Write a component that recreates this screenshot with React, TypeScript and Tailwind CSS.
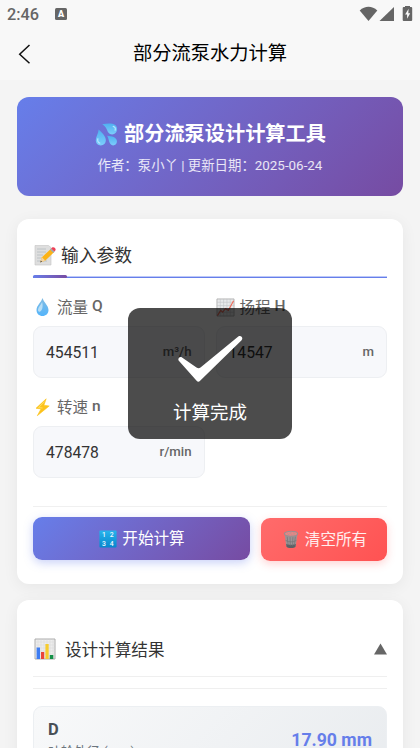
import React from "react";

type IconProps = { className?: string };

const Sweat = ({ className }: IconProps) => (
  <svg className={className} viewBox="0 0 24 24">
    <defs>
      <linearGradient id="sweat" x1="0" y1="0" x2="0" y2="1">
        <stop offset="0" stopColor="#4fb0f0" />
        <stop offset="1" stopColor="#7ccdfb" />
      </linearGradient>
    </defs>
    <path d="M7.5 1.4c5-1.200 10.500-1.300 13.300.4 2.800 1.900 2.900 6.200.8 8.500-2.200 2.300-5.800 2.200-7.700-.3C12 7 12 4 7.500 1.400z" fill="url(#sweat)" />
    <path d="M3.800 6.800c3.500 3.200 7.500 7.200 7.500 11.200 0 3.200-2.300 5.400-5.300 5.400S.8 21.100.8 18c0-3.700 2.700-6.600 3-11.200z" fill="url(#sweat)" />
    <path d="M12.700 13.400c4.800.2 9.900 1.600 10.200 5.500.2 2.700-1.700 4.500-4 4.500-4.300 0-4-6-6.200-10z" fill="url(#sweat)" />
    <path d="M3 16.500c-.7 2 .3 4 2 4.500M19 3.500c2 .5 2.700 2.300 2 4" stroke="#b5e4ff" strokeWidth="1.300" strokeLinecap="round" fill="none" />
  </svg>
);

const Memo = ({ className }: IconProps) => (
  <svg className={className} viewBox="0 0 22 22">
    <path d="M1 1.500h13.500l2.500 2v17.500H1z" fill="#dedede" stroke="#c4c4c4" strokeWidth=".6" />
    <path d="M3 5h9M3 8h9M3 11h6M3 14h4M3 17h10" stroke="#b5bcc0" strokeWidth=".8" />
    <path d="M6.200 18.300l1.700-5L17 4.700l3.200 3.400-9.100 8.600z" fill="#fcb316" />
    <path d="M8 13.200l3.200 3.400-5 1.800z" fill="#f3d3a2" />
    <path d="M6.900 16.500l1.200 1.200-1.900.7z" fill="#444" />
    <path d="M16 5.600l1.400-1.300 3.300 3.300-1.400 1.400z" fill="#9eacb3" />
    <path d="M17.200 4.500l.9-.9c1.900-1.500 4.500 1.100 3.200 2.900l-.9 1.100z" fill="#ee4056" />
  </svg>
);

const Droplet = ({ className }: IconProps) => (
  <svg className={className} viewBox="0 0 18 20">
    <defs>
      <linearGradient id="drop" x1="0" y1="0" x2="0" y2="1">
        <stop offset="0" stopColor="#82bce2" />
        <stop offset="1" stopColor="#55b5fb" />
      </linearGradient>
    </defs>
    <path d="M9 1c1.300 4.500 6 7.500 6 12 0 3.700-2.700 6-6 6s-6-2.300-6-6C3 8.500 7.700 5.500 9 1z" fill="url(#drop)" />
    <path d="M8.600 5c-1 3-4 5-4.100 7.800-.1 1.500 1 2.500 2.200 1.800C9.500 13 9.500 8 8.600 5z" fill="#b8def5" />
  </svg>
);

const Trend = ({ className }: IconProps) => (
  <svg className={className} viewBox="0 0 20 20">
    <path d="M1 1h18v18H1z" fill="#e7e9ea" stroke="#a6a6a6" strokeWidth=".8" />
    <path d="M4.500 1v18M8 1v18M11.500 1v18M15 1v18M1 4.500h18M1 8h18M1 11.500h18M1 15h18" stroke="#bfc3c5" strokeWidth=".6" />
    <path d="M1.500 18.500L5 13l2 2 3-4 3 2 5.500-10" stroke="#ee6b5a" strokeWidth="1.200" fill="none" />
  </svg>
);

const Bolt = ({ className }: IconProps) => (
  <svg className={className} viewBox="0 0 18 20">
    <path d="M12.700 1.800L2.500 11.300l5 .6-3.700 6.800L15.700 9l-5.300-.8z" fill="#fcc21b" stroke="#fcc21b" strokeWidth=".6" strokeLinejoin="round" />
    <path d="M11 4.700L5 10.600l4 .4" stroke="#ffdf63" strokeWidth="1" fill="none" />
  </svg>
);

const Numbers = ({ className }: IconProps) => (
  <svg className={className} viewBox="0 0 18 18">
    <defs>
      <linearGradient id="nums" x1="0" y1="0" x2="0" y2="1">
        <stop offset="0" stopColor="#27b4ec" />
        <stop offset="1" stopColor="#0786cd" />
      </linearGradient>
    </defs>
    <rect x=".4" y=".4" width="17.200" height="17.200" rx="1" fill="url(#nums)" />
    <g fill="#eef9fe" fontSize="6.800" fontWeight="500" fontFamily="Roboto" textAnchor="middle">
      <text x="5" y="7.300">1</text>
      <text x="12.700" y="7.300">2</text>
      <text x="5" y="15.500">3</text>
      <text x="12.700" y="15.500">4</text>
    </g>
  </svg>
);

const Trash = ({ className }: IconProps) => (
  <svg className={className} viewBox="0 0 18 20">
    <path d="M2.300 4l1.700 13c.2 2 9.800 2 10 0l1.700-13z" fill="#9b9496" />
    <path d="M3.900 14.500l.4 3c.6 1.800 8.800 1.800 9.400 0l.4-3c-2 1.500-8.200 1.500-10.200 0z" fill="#5d6165" />
    <path d="M5 7l1 9M8 7.500l.3 9M11 7.500l-.4 9M13.600 7l-1 9M3.400 11c3 2 8.200 2 11.200 0" stroke="#777577" strokeWidth=".8" fill="none" />
    <ellipse cx="9" cy="4" rx="7" ry="2.700" fill="#e98583" stroke="#9b8e90" strokeWidth="1.200" />
    <path d="M5 3l2 3M8 2l2 4M11 2l2 3M13 3l-3 3M10 2L6 5" stroke="#aa9496" strokeWidth=".5" />
  </svg>
);

const BarChart = ({ className }: IconProps) => (
  <svg className={className} viewBox="0 0 22 22">
    <path d="M1 1h20v20H1z" fill="#ededed" stroke="#acacac" strokeWidth="1" />
    <path d="M4 1v20M7 1v20M10 1v20M13 1v20M16 1v20M19 1v20M1 4h20M1 7h20M1 10h20M1 13h20M1 16h20" stroke="#d4d4d4" strokeWidth=".5" />
    <path d="M2.600 9.500h3.400V21H2.600z" fill="#3e7df2" />
    <path d="M7 14h3.200v7H7z" fill="#ea4437" />
    <path d="M11.400 6h3.300v15h-3.300z" fill="#f6cc2e" />
    <path d="M15.800 17h3.500v4h-3.500z" fill="#149048" />
  </svg>
);

const StatusBar = () => (
  <div className="flex h-7 items-center justify-between pl-[7px] pr-[7px] text-[#666]">
    <div className="flex items-center gap-4">
      <span className="w-8 pt-[2px] text-[16.300px] leading-7 font-medium whitespace-nowrap">2:46</span>
      <span className="flex size-3 items-center justify-center rounded-[1.500px] bg-[#666] text-[9px] leading-none font-black text-white">
        A
      </span>
    </div>
    <svg className="-mt-[3px] h-[18px] w-[54px]" viewBox="0 0 54 18" fill="#656565">
      <path d="M.7 6.500C6 1.500 13 1.500 18.300 6.500L9.500 17z" />
      <path d="M35 3v14H20.500z" />
      <path d="M46 3V2h5v1h1.200q1 0 1 1v12q0 1-1 1h-7.500q-1 0-1-1V4q0-1 1-1z" />
      <path d="M49.600 4.800l-3.500 5.600h2v4.300l3.100-5.500h-1.900z" fill="#f8f8f8" />
    </svg>
  </div>
);

type FieldProps = {
  icon: React.ReactNode;
  name: string;
  symbol: string;
  value: string;
  unit: string;
};

const Field = ({ icon, name, symbol, value, unit }: FieldProps) => (
  <div>
    <div className="flex h-6 items-center gap-[5px] text-[15.500px] text-[#666]">
      {icon}
      <span className="flex gap-1">
        <span className="pt-[3px]">{name}</span>
        <span className="pt-px font-medium">{symbol}</span>
      </span>
    </div>
    <div className="mt-[7px] flex h-[52px] items-center justify-between rounded-[9px] border border-[#edeff2] bg-[#f7f8fb] px-3">
      <span className="pt-[2px] text-[15.700px] text-[#333]">{value}</span>
      <span className="text-[13.200px] font-medium text-[#666]">{unit}</span>
    </div>
  </div>
);

const Toast = () => (
  <div className="absolute top-[308px] left-32 flex h-[131px] w-[164px] flex-col items-center rounded-xl bg-black/70 pt-[27px] text-white">
    <svg className="mr-px h-[48px] w-[66px]" viewBox="0 0 66 48">
      <path d="M5 22.600c-1.800-1.500-4.500.7-3.400 3l18 20.200q1.700 1.800 3.500 0L64.600 5.200c2-2.300-.7-5.300-3.300-3.600L23.500 32.500q-1.900 1.400-4 0z" fill="#fff" />
    </svg>
    <span className="mt-4 text-[18.500px] leading-7">计算完成</span>
  </div>
);

const App = () => {
  return (
    <div className="relative h-[748px] w-[420px] overflow-hidden bg-[#f4f4f4] font-['Roboto','Noto_Sans_CJK_SC',sans-serif]">
      <header className="h-20 bg-[#f8f8f8]">
        <StatusBar />
        <div className="grid h-[51px] grid-cols-[60px_1fr_60px] items-center">
          <svg className="ml-[18px] h-5 w-[13px]" viewBox="0 0 13 20" fill="none" stroke="#111" strokeWidth="1.500">
            <path d="M11.500 1L1.700 10.200l9.800 9" />
          </svg>
          <h1 className="pt-[2px] text-center text-[19.300px] text-black">部分流泵水力计算</h1>
        </div>
      </header>

      <main className="px-[17px] pt-[17px]">
        <section className="flex h-[99px] flex-col items-center rounded-xl bg-linear-135 from-[#667eea] to-[#764ba2] pt-[22px] text-white">
          <h2 className="flex h-[30px] items-center gap-[6px] pl-px text-[20.200px] font-bold">
            <Sweat className="size-[23px]" />
            <span>部分流泵设计计算工具</span>
          </h2>
          <p className="mt-[7px] text-[13.400px] leading-5 text-white/85">作者：泵小丫 | 更新日期：2025-06-24</p>
        </section>

        <section className="mt-[23px] h-[365px] rounded-xl bg-white px-4 pt-[22px] shadow-[0_3px_16px_rgba(0,0,0,0.06)]">
          <div className="flex h-[37px] flex-col justify-between border-b border-[#667eea] shadow-[inset_0_-1px_0_#bcc8f8]">
            <h3 className="flex h-7 items-center gap-[5px] pl-[1px] text-[17.800px] text-[#333]">
              <Memo className="size-[22px]" />
              <span className="pt-[2px]">输入参数</span>
            </h3>
            <div className="-mb-px h-[3px] w-[34px] shrink-0 rounded-full bg-linear-to-r from-[#667eea] to-[#764ba2]" />
          </div>
          <div className="mt-[17px] grid grid-cols-2 gap-x-[11px] gap-y-[17px]">
            <Field icon={<Droplet className="h-5 w-[19px]" />} name="流量" symbol="Q" value="454511" unit="m³/h" />
            <Field icon={<Trend className="h-[19px] w-[19px]" />} name="扬程" symbol="H" value="14547" unit="m" />
            <Field icon={<Bolt className="h-5 w-[19px]" />} name="转速" symbol="n" value="478478" unit="r/min" />
          </div>
          <div className="mt-7 flex gap-[11px] border-t border-[#f0f0f0] pt-[10px]">
            <button className="flex h-[43px] w-[217px] items-center justify-center gap-[5px] rounded-[9px] bg-linear-135 from-[#667eea] to-[#764ba2] pl-px text-[15.600px] text-white shadow-[0_3px_10px_rgba(102,126,234,0.35)]">
              <Numbers className="size-[18px]" />
              <span className="pt-[2px]">开始计算</span>
            </button>
            <button className="mt-px flex h-[43px] flex-1 items-center justify-center gap-[5px] rounded-[9px] bg-linear-135 from-[#ff6b6b] to-[#ff5252] pl-px text-[15.600px] text-white/90 shadow-[0_3px_8px_rgba(255,82,82,0.25)]">
              <Trash className="h-[19px] w-[18px]" />
              <span className="pt-[2px]">清空所有</span>
            </button>
          </div>
        </section>

        <section className="mt-4 h-[300px] rounded-xl bg-white px-4 pt-[23px] shadow-[0_3px_16px_rgba(0,0,0,0.06)]">
          <div className="flex h-[54px] items-center justify-between border-b border-[#efefef] pl-[1px]">
            <h3 className="flex items-center gap-[9px] text-[16.600px] text-[#333]">
              <BarChart className="size-[22px]" />
              <span className="pt-[3px]">设计计算结果</span>
            </h3>
            <svg className="-mt-[2px] h-3 w-[13px]" viewBox="0 0 13 12" fill="#666">
              <path d="M6.500 0.500L13 11.500H0z" />
            </svg>
          </div>
          <div className="mt-[11px] border-t border-[#efefef] pt-[17px]">
            <div className="flex h-[68px] items-center justify-between rounded-[9px] border border-[#eceff2] bg-linear-135 from-[#f8f9fa] to-[#e9ecef] px-[14px]">
              <div>
                <div className="pt-px text-[16.500px] leading-5 font-bold text-[#495057]">D</div>
                <div className="mt-[2px] text-[13px] leading-5 text-[#6c757d]">叶轮外径 (mm)</div>
              </div>
              <span className="text-[17.700px] font-bold text-[#667eea]">17.90 mm</span>
            </div>
          </div>
        </section>
      </main>

      <Toast />
    </div>
  );
};

export default App;
